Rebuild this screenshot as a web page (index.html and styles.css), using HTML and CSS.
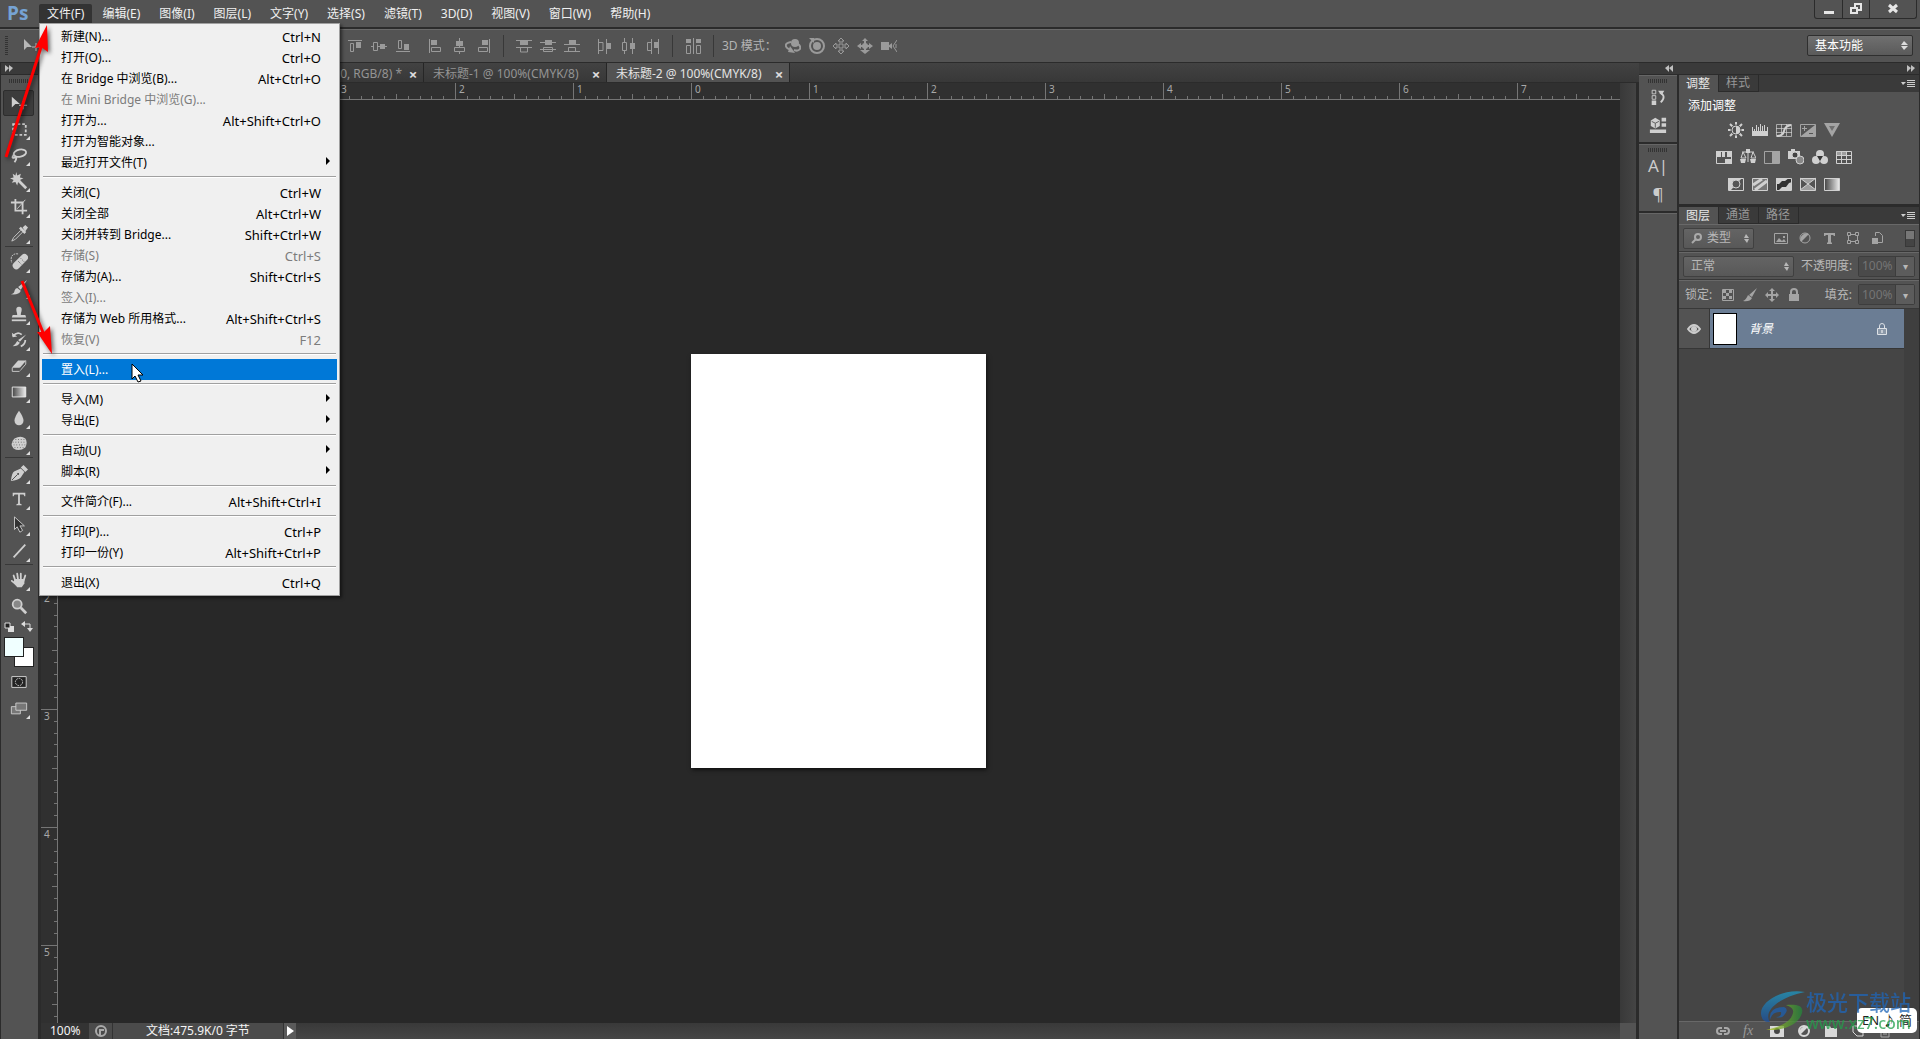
FILE: index.html
```html
<!DOCTYPE html>
<html lang="zh-CN">
<head>
<meta charset="utf-8">
<title>Photoshop</title>
<link rel="stylesheet" href="styles.css">
</head>
<body>
<header class="menubar">
  <div class="logo">Ps</div>
  <nav class="menus">
    <div class="menu-host">
      <button class="menu-title open">文件(F)</button>
      <div class="dropdown" role="menu">
        <button class="entry"><span>新建(N)...</span><span>Ctrl+N</span></button>
        <button class="entry"><span>打开(O)...</span><span>Ctrl+O</span></button>
        <button class="entry"><span>在 Bridge 中浏览(B)...</span><span>Alt+Ctrl+O</span></button>
        <button class="entry" disabled><span>在 Mini Bridge 中浏览(G)...</span></button>
        <button class="entry"><span>打开为...</span><span>Alt+Shift+Ctrl+O</span></button>
        <button class="entry"><span>打开为智能对象...</span></button>
        <button class="entry sub"><span>最近打开文件(T)</span></button>
        <hr>
        <button class="entry"><span>关闭(C)</span><span>Ctrl+W</span></button>
        <button class="entry"><span>关闭全部</span><span>Alt+Ctrl+W</span></button>
        <button class="entry"><span>关闭并转到 Bridge...</span><span>Shift+Ctrl+W</span></button>
        <button class="entry" disabled><span>存储(S)</span><span>Ctrl+S</span></button>
        <button class="entry"><span>存储为(A)...</span><span>Shift+Ctrl+S</span></button>
        <button class="entry" disabled><span>签入(I)...</span></button>
        <button class="entry"><span>存储为 Web 所用格式...</span><span>Alt+Shift+Ctrl+S</span></button>
        <button class="entry" disabled><span>恢复(V)</span><span>F12</span></button>
        <hr>
        <button class="entry hot"><span>置入(L)...</span></button>
        <hr>
        <button class="entry sub"><span>导入(M)</span></button>
        <button class="entry sub"><span>导出(E)</span></button>
        <hr>
        <button class="entry sub"><span>自动(U)</span></button>
        <button class="entry sub"><span>脚本(R)</span></button>
        <hr>
        <button class="entry"><span>文件简介(F)...</span><span>Alt+Shift+Ctrl+I</span></button>
        <hr>
        <button class="entry"><span>打印(P)...</span><span>Ctrl+P</span></button>
        <button class="entry"><span>打印一份(Y)</span><span>Alt+Shift+Ctrl+P</span></button>
        <hr>
        <button class="entry"><span>退出(X)</span><span>Ctrl+Q</span></button>
      </div>
    </div>
    <button class="menu-title">编辑(E)</button>
    <button class="menu-title">图像(I)</button>
    <button class="menu-title">图层(L)</button>
    <button class="menu-title">文字(Y)</button>
    <button class="menu-title">选择(S)</button>
    <button class="menu-title">滤镜(T)</button>
    <button class="menu-title">3D(D)</button>
    <button class="menu-title">视图(V)</button>
    <button class="menu-title">窗口(W)</button>
    <button class="menu-title">帮助(H)</button>
  </nav>
  <div class="window-buttons">
    <button aria-label="最小化"><svg width="12" height="12"><path d="M1 8h10v3H1z" fill="#e6e6e6"/></svg></button>
    <button aria-label="还原"><svg width="12" height="12" fill="none" stroke="#e6e6e6" stroke-width="2"><path d="M5 4V1h6v6H8"/><path d="M1 5h6v5H1z"/></svg></button>
    <button class="wide" aria-label="关闭"><svg width="12" height="12" stroke="#e6e6e6" stroke-width="3"><path d="M2 2l8 7M10 2L2 9"/></svg></button>
  </div>
</header>

<div class="options">
  <svg class="side-grip" width="3" height="20"><path d="M1.500 0v20" stroke="#333" stroke-width="3" stroke-dasharray="1 1"/></svg>
  <svg class="move-icon" width="18" height="16"><path d="M1 1v11l3-3 5 0z" fill="#b8b8b8"/><path d="M9 9h8M13 5v8" stroke="#b8b8b8"/></svg>
  <div class="align-tools">
    <button aria-label="顶对齐"><svg class="i" viewBox="0 0 16 16"><path d="M1 2.500h14"/><path d="M3.500 5.500h3v8h-3z"/><path class="f" d="M9 4h5v6H9z"/></svg></button>
    <button aria-label="垂直居中"><svg class="i" viewBox="0 0 16 16"><path d="M0 8.500h2M7 8.500h2M14 8.500h2M2.500 4.500h4v8h-4z"/><path class="f" d="M9 6h5v5H9z"/></svg></button>
    <button aria-label="底对齐"><svg class="i" viewBox="0 0 16 16"><path d="M1 13.500h14M3.500 2.500h3v8h-3z"/><path class="f" d="M9 6h5v6H9z"/></svg></button>
    <button class="gap" aria-label="左对齐"><svg class="i" viewBox="0 0 16 16"><path d="M2.500 1v14M4.500 9.500h9v4h-9z"/><path class="f" d="M4 2h6v5H4z"/></svg></button>
    <button aria-label="水平居中"><svg class="i" viewBox="0 0 16 16"><path d="M8.500 0v9M8.500 13v3M3.500 9.500h10v4h-10z"/><path class="f" d="M5 3h7v5H5z"/></svg></button>
    <button aria-label="右对齐"><svg class="i" viewBox="0 0 16 16"><path d="M14.500 1v14M3.500 9.500h9v4h-9z"/><path class="f" d="M7 2h6v5H7z"/></svg></button>
  </div>
  <div class="align-tools ruled">
    <button aria-label="按顶分布"><svg class="i" viewBox="0 0 16 16"><path d="M0 2.500h16M0 9.500h16M4.500 10v4h7v-4"/><path class="f" d="M4 3h8v4H4z"/></svg></button>
    <button aria-label="垂直居中分布"><svg class="i" viewBox="0 0 16 16"><path d="M0 4.500h16M0 11.500h16M3.500 9.500h9v4h-9z"/><path class="f" d="M5 2h7v5H5z"/></svg></button>
    <button aria-label="按底分布"><svg class="i" viewBox="0 0 16 16"><path d="M0 6.500h16M0 13.500h16M4.500 13V9.500h7V13"/><path class="f" d="M5 2h7v5H5z"/></svg></button>
    <button class="gap" aria-label="按左分布"><svg class="i" viewBox="0 0 16 16"><path d="M2.500 1v15M3 4.500h4v8H3M10.500 1v15"/><path class="f" d="M10 5h5v6h-5z"/></svg></button>
    <button aria-label="水平居中分布"><svg class="i" viewBox="0 0 16 16"><path d="M4.500 0v4M4.500 12v4M2.500 4.500h4v8h-4zM12.500 0v16"/><path class="f" d="M10 5h5v6h-5z"/></svg></button>
    <button aria-label="按右分布"><svg class="i" viewBox="0 0 16 16"><path d="M7.500 1v15M7 4.500H3.500v8H7M14.500 1v15"/><path class="f" d="M10 4h5v6h-5z"/></svg></button>
  </div>
  <div class="align-tools ruled tight">
    <button aria-label="自动对齐图层"><svg class="i" viewBox="0 0 16 16"><path d="M1.500 7.500h4v8h-4zM8.500 0v16M11.500 7.500h4v8h-4z"/><path class="f" d="M1 1h5v4H1zM11 1h5v4h-5z"/></svg></button>
  </div>
  <div class="align-tools ruled mode">
    <span>3D 模式：</span>
    <button aria-label="旋转 3D 对象"><svg class="i" viewBox="0 0 16 16"><circle cx="10" cy="5" r="4" class="f"/><path d="M6 4C-2 5 0 11 7 12M13 6c5 4 1 8-4 6" stroke-width="2"/><path class="f" d="M5 8l5 7-7-1z"/></svg></button>
    <button aria-label="滚动 3D 对象"><svg class="i" viewBox="0 0 16 16"><circle cx="8" cy="8" r="7" stroke-width="2"/><circle cx="8" cy="8" r="4" class="f"/><path class="f" d="M0 0h5v5z"/></svg></button>
    <button aria-label="拖动 3D 对象"><svg class="i" viewBox="0 0 16 16"><path d="M8 0l3 3H9v4h4V5l3 3-3 3V9H9v4h2l-3 3-3-3h2V9H3v2L0 8l3-3v2h4V3H5z"/></svg></button>
    <button aria-label="滑动 3D 对象"><svg class="i" viewBox="0 0 16 16"><path class="f" d="M8 0l3 3H5zM0 8l4-3v6zM16 8l-4-3v6zM8 16l5-4H3z"/><circle cx="8" cy="8" r="3" class="f"/><path d="M2 8h12M8 2v12" stroke-width="2"/></svg></button>
    <button aria-label="缩放 3D 对象"><svg class="i" viewBox="0 0 16 16"><path class="f" d="M0 4h8v8H0zM7 8l4-3v6z"/><path d="M16 2l-4 6 4 6M15 6v4"/></svg></button>
  </div>
  <button class="workspace"><span>基本功能</span><svg width="7" height="9" fill="#ddd"><path d="M0 4l3-4 4 4zM0 5h7L3 9z"/></svg></button>
</div>

<div class="work">
  <aside class="toolbox">
    <div class="strip"><svg class="dbl" width="8" height="7"><path d="M0 0l4 3-4 4zM4 0l4 3-4 4z"/></svg></div>
    <div class="tools">
      <svg class="grip" width="20" height="4"><path d="M0 2h20" stroke="#333" stroke-width="4" stroke-dasharray="1 1"/></svg>
      <button class="tool on" aria-label="移动工具"><svg class="t" viewBox="0 0 20 20"><path class="f" d="M2 3v12l4-4h5z"/><path d="M10 12.500h9M14.500 8v9"/></svg></button>
      <button class="tool more" aria-label="矩形选框工具"><svg class="t" viewBox="0 0 20 20"><path d="M3.500 4.500h14v12h-14z" stroke-dasharray="3 2" stroke-width="2"/></svg></button>
      <button class="tool more" aria-label="套索工具"><svg class="t" viewBox="0 0 20 20"><ellipse cx="11" cy="8" rx="7" ry="4" stroke-width="2" transform="rotate(-12 11 8)"/><path d="M4 10q-3 4 1 3t0 5" stroke-width="2"/></svg></button>
      <button class="tool more" aria-label="魔棒工具"><svg class="t" viewBox="0 0 20 20"><path class="f" d="M7 0l1 4 4-2-1 4 4 1-4 2 2 3-4-1-1 4-2-4-4 1 2-3-4-2 4-1-1-4 3 2z"/><path d="M10 10l8 8" stroke-width="3"/></svg></button>
      <button class="tool more" aria-label="裁剪工具"><svg class="t" viewBox="0 0 20 20"><path d="M6 1v13h13M1 5h13v13" stroke-width="2"/><path d="M8 12l9-10"/></svg></button>
      <button class="tool more" aria-label="吸管工具"><svg class="t" viewBox="0 0 20 20"><path d="M12 7l-8 8-2 4 4-2 8-8"/><path class="f" d="M10 5l2-2 6 6-2 2zM14 4l3-3 3 3-3 4z"/></svg></button>
      <hr>
      <button class="tool more" aria-label="污点修复画笔工具"><svg class="t" viewBox="0 0 20 20"><path d="M9 1C2 0 0 5 2 11" stroke-dasharray="2 1"/><path d="M7 14l9-9" stroke-width="8" stroke-linecap="round"/><path d="M9 9l4 4M12 6l4 4" stroke="#555" stroke-dasharray="1 1"/></svg></button>
      <button class="tool more" aria-label="画笔工具"><svg class="t" viewBox="0 0 20 20"><path class="f" d="M19 1l-7 11-3-3zM8 10l4 3q-2 5-11 4 4-1 4-4 1-3 3-3z"/></svg></button>
      <button class="tool more" aria-label="仿制图章工具"><svg class="t" viewBox="0 0 20 20"><path class="f" d="M7 5a3 3 0 1 1 6 0c0 3-1 3-1 6h5l1 3H2l1-3h5c0-3-1-3-1-6z"/><path d="M2 17h16" stroke-width="2"/></svg></button>
      <button class="tool more" aria-label="历史记录画笔工具"><svg class="t" viewBox="0 0 20 20"><path class="f" d="M18 4l-7 8-2-2zM8 11l3 2q-2 4-8 4 3-2 5-6zM2 2l1 5 5-1z"/><path d="M3 6q5-6 10-2M17 10q0 5-5 7" stroke-width="2"/></svg></button>
      <button class="tool more" aria-label="橡皮擦工具"><svg class="t" viewBox="0 0 20 20"><path class="f" d="M9 4h9l-7 8H2z"/><path d="M2.500 12v4h8l7-8V4"/><path d="M11 12v4" stroke="#555"/></svg></button>
      <button class="tool more" aria-label="渐变工具"><svg class="t" viewBox="0 0 20 20"><defs><linearGradient id="fade"><stop stop-color="#444"/><stop offset="1" stop-color="#eee"/></linearGradient></defs><path d="M2.500 4.500h15v11h-15z" fill="url(#fade)" stroke="#eee"/></svg></button>
      <button class="tool more" aria-label="模糊工具"><svg class="t" viewBox="0 0 20 20"><path class="f" d="M10 2q5 7 5 11a5 5 0 0 1-10 0q0-4 5-11z"/></svg></button>
      <button class="tool more" aria-label="海绵工具"><svg class="t" viewBox="0 0 20 20"><path class="f" d="M5 4q7-4 12 0 3 4 0 10-7 5-13 1-5-5 1-11z"/><path d="M3 8h14M4 11h14M5 14h11M6 5h10" stroke="#666" stroke-dasharray="1 2"/></svg></button>
      <hr>
      <button class="tool more" aria-label="钢笔工具"><svg class="t" viewBox="0 0 20 20"><path class="f" d="M1 19q1-10 4-11l7-3 4 4-4 6q-3 3-11 4zM12 4l3-3 5 5-3 3z"/><path d="M2 18l6-6" stroke="#444"/><circle cx="9" cy="11" r="1" fill="#333" stroke="none"/></svg></button>
      <button class="tool more" aria-label="文字工具"><svg class="t" viewBox="0 0 20 20"><path class="f" d="M3 3h14v4h-1l-1-2h-4v10l2 1v1H7v-1l2-1V5H5L4 7H3z"/></svg></button>
      <button class="tool more" aria-label="路径选择工具"><svg class="t" viewBox="0 0 20 20"><path d="M5 1v14l3-3 3 6 3-2-3-5h5z" fill="#333"/></svg></button>
      <button class="tool more" aria-label="直线工具"><svg class="t" viewBox="0 0 20 20"><path d="M4 17L17 3" stroke-width="2"/></svg></button>
      <hr>
      <button class="tool more" aria-label="抓手工具"><svg class="t" viewBox="0 0 20 20"><path d="M6 11L4 5M9 10L8 3M12 10V3M15 11l2-6M7 15l-5-4" stroke-width="2" stroke-linecap="round"/><path class="f" d="M5 9h11v5l-3 4H8l-4-5z"/></svg></button>
      <button class="tool" aria-label="缩放工具"><svg class="t" viewBox="0 0 20 20"><circle cx="8" cy="8" r="5" stroke-width="2" fill="#888"/><path d="M12 12l6 6" stroke-width="3"/></svg></button>
      <div class="mini">
        <svg width="10" height="10"><path d="M4 4h6v6H4z" fill="#ddd"/><path d="M1 1h5v5H1z" fill="#222" stroke="#ddd"/></svg>
        <svg width="12" height="12"><path d="M3 3h6v5" stroke="#ddd" fill="none"/><path d="M4 0v6L0 3zM6 7h6l-3 4z" fill="#ddd"/></svg>
      </div>
      <div class="swatches"><button class="fg" aria-label="前景色"></button><button class="bg" aria-label="背景色"></button></div>
      <button class="tool" aria-label="快速蒙版"><svg class="t" viewBox="0 0 20 20"><path d="M2 4h16v12H2z" fill="#222" stroke="#ddd"/><circle cx="10" cy="10" r="4" stroke-dasharray="2 1"/></svg></button>
      <button class="tool more" aria-label="屏幕模式"><svg class="t" viewBox="0 0 20 20"><path d="M1.500 8.500h10v8h-10z" fill="#777"/><path d="M6.500 4.500h12v8h-12z" fill="#777"/></svg></button>
    </div>
  </aside>

  <main class="document">
    <div class="tabs">
      <div class="tab first"><span>未标题-3 @ 66.7%(图层 0, RGB/8) *</span><button aria-label="关闭">×</button></div>
      <div class="tab"><span>未标题-1 @ 100%(CMYK/8)</span><button aria-label="关闭">×</button></div>
      <div class="tab current"><span>未标题-2 @ 100%(CMYK/8)</span><button aria-label="关闭">×</button></div>
    </div>
    <div class="view">
      <div class="stage">
        <div class="corner"></div>
        <div class="ruler-h"><span>5</span><span>4</span><span>3</span><span>2</span><span>1</span><span>0</span><span>1</span><span>2</span><span>3</span><span>4</span><span>5</span><span>6</span><span>7</span></div>
        <div class="ruler-v"><span>2</span><span>1</span><span>0</span><span>1</span><span>2</span><span>3</span><span>4</span><span>5</span></div>
        <div class="canvas"><div class="paper"></div></div>
      </div>
      <div class="vscroll"></div>
    </div>
    <footer class="status">
      <span class="zoom">100%</span>
      <button class="share" aria-label="共享"><svg width="12" height="12" fill="none" stroke="#aaa" stroke-width="2"><circle cx="6" cy="6" r="5"/><path d="M5 10V5h4"/></svg></button>
      <span class="size">文档:475.9K/0 字节</span>
      <button class="play" aria-label="更多"><svg width="7" height="10"><path d="M0 0l7 5-7 5z" fill="#fff"/></svg></button>
      <span class="hscroll"></span>
      <span class="nook"></span>
    </footer>
  </main>

  <aside class="dock">
    <div class="strip right"><svg class="dbl" width="8" height="7"><path d="M4 0v7L0 3zM8 0v7L4 3z"/></svg></div>
    <div class="dock-group">
      <svg class="grip" width="20" height="4"><path d="M0 2h20" stroke="#333" stroke-width="4" stroke-dasharray="1 1"/></svg>
      <button aria-label="历史记录"><svg class="t" viewBox="0 0 20 20"><path d="M3.500 2.500h4v4h-4zM3.500 8.500h4v4h-4z"/><path class="f" d="M3 14h5v5H3zM10 3h7l-3 5z"/><path d="M12 5q8 4 1 11" stroke-width="2"/></svg></button>
      <button aria-label="属性"><svg class="t" viewBox="0 0 20 20"><path class="f" d="M2 5l5-3 5 3v6l-5 3-5-3z"/><path d="M3 6l4 2 4-2M7 8v5" stroke="#555"/><path class="f" d="M14 2h5v4h-5zM14 8h5v4h-5zM1 15h18v4H1z"/></svg></button>
    </div>
    <div class="dock-group">
      <svg class="grip" width="20" height="4"><path d="M0 2h20" stroke="#333" stroke-width="4" stroke-dasharray="1 1"/></svg>
      <button class="letter" aria-label="字符">A|</button>
      <button class="letter" aria-label="段落">¶</button>
    </div>
    <div class="dock-rest"></div>
  </aside>

  <section class="panels">
    <div class="strip right"><svg class="dbl" width="8" height="7"><path d="M0 0l4 3-4 4zM4 0l4 3-4 4z"/></svg></div>
    <div class="panel">
      <div class="panel-tabs">
        <button class="ptab current">调整</button><button class="ptab">样式</button>
        <svg class="flyout" width="14" height="8"><path d="M0 2h5L2 5z" fill="#ccc"/><path d="M6 0.500h8M6 2.500h8M6 4.500h8M6 6.500h8" stroke="#ccc"/></svg>
      </div>
      <div class="adjust">
        <p>添加调整</p>
        <div class="adj-row">
          <svg class="a" viewBox="0 0 16 16"><path d="M8 0v16M0 8h16M2 2l12 12M14 2L2 14" stroke-width="2"/><circle cx="8" cy="8" r="5" fill="#535353" stroke="#535353"/><circle cx="8" cy="8" r="4"/><path class="f" d="M8 4a4 4 0 0 1 0 8z"/></svg>
          <svg class="a" viewBox="0 0 16 16"><path class="f" d="M0 9h16v5H0z"/><path d="M.5 5v5M2.500 7v3M4.500 3v6M6.500 5v4M8.500 2v7M10.500 4v5M12.500 3v6M15.500 5v5"/></svg>
          <svg class="a" viewBox="0 0 16 16"><path d="M.5 2.500h15v12H.5zM5.500 2v12M10.500 2v12M0 6.500h16M0 10.500h16" opacity=".7"/><path d="M1 14q6 0 7-5t7-6" stroke-width="2"/></svg>
          <svg class="a dim" viewBox="0 0 16 16"><path d="M.5 2.500h15v12H.5z"/><path class="f" d="M1 14L15 3v11z"/><path d="M2 6.500h5M4.500 4v5"/><path d="M9 11.500h4" stroke="#535353"/></svg>
          <svg class="a dim" viewBox="0 0 16 16"><path class="f" d="M0 1h16L8 15z"/><path d="M5 4h6L8 9z" fill="#808080" stroke="none"/></svg>
        </div>
        <div class="adj-row">
          <svg class="a" viewBox="0 0 16 16"><path d="M.5 2.500h15v12H.5z"/><path class="f" d="M0 2h5v6H0zM6 2h3v6H6zM11 2h5v6h-5zM9 10h7v5H9z"/></svg>
          <svg class="a" viewBox="0 0 16 16"><path d="M8 1v12M2 3h12M3 3L1 9h5zM13 3l-2 6h5z"/><path class="f" d="M0 10h6l-1 4H1zM10 10h6l-1 4h-4zM6 0h4v4H6z"/></svg>
          <svg class="a dim" viewBox="0 0 16 16"><path d="M.5 2.500h15v12H.5z"/><path class="f" d="M8 2h8v12H8z"/></svg>
          <svg class="a" viewBox="0 0 16 16"><path class="f" d="M0 2h3V0h4v2h5v8H0z"/><circle cx="7" cy="6" r="3" fill="#444"/><circle cx="12" cy="11" r="4" fill="#888"/></svg>
          <svg class="a" viewBox="0 0 16 16"><circle class="f" cx="8" cy="5" r="4"/><circle class="f" cx="4" cy="11" r="4"/><circle class="f" cx="12" cy="11" r="4"/><path d="M5 7h6l-3 5z" fill="#333" stroke="none"/></svg>
          <svg class="a" viewBox="0 0 16 16"><path d="M.5 2.500h15v12H.5zM5.500 2v12M10.500 2v12M0 6.500h16M0 10.500h16"/><path class="f" d="M0 2h11v4H0z" opacity=".6"/></svg>
        </div>
        <div class="adj-row">
          <svg class="a" viewBox="0 0 16 16"><path d="M.5 2.500h15v12H.5z"/><path class="f" d="M0 2h14L3 14H0z"/><circle cx="8" cy="8" r="4" fill="#555"/></svg>
          <svg class="a" viewBox="0 0 16 16"><path d="M.5 2.500h15v12H.5z" fill="#777"/><path d="M1 9L10 3M3 14L15 5" stroke-width="3"/></svg>
          <svg class="a" viewBox="0 0 16 16"><path d="M.5 2.500h15v12H.5z" fill="#333"/><path class="f" d="M0 2h13l-4 3H6L3 8H0zM16 6v8H3l3-3h4l3-4z"/></svg>
          <svg class="a" viewBox="0 0 16 16"><path d="M.5 2.500h15v12H.5z"/><path class="f" d="M0 2h16L8 8zM0 14l8-6 8 6z" opacity=".6"/><path d="M0 2l16 12M16 2L0 14"/></svg>
          <svg class="a" viewBox="0 0 16 16"><path d="M.5 2.500h15v12H.5z" fill="url(#fade)"/></svg>
        </div>
      </div>
    </div>
    <div class="panel layers">
      <div class="panel-tabs">
        <button class="ptab current">图层</button><button class="ptab">通道</button><button class="ptab">路径</button>
        <svg class="flyout" width="14" height="8"><path d="M0 2h5L2 5z" fill="#ccc"/><path d="M6 0.500h8M6 2.500h8M6 4.500h8M6 6.500h8" stroke="#ccc"/></svg>
      </div>
      <div class="lrow">
        <button class="pick kind"><svg width="11" height="11" fill="none" stroke="#aaa" stroke-width="2"><circle cx="7" cy="4" r="3"/><path d="M5 6l-4 4"/></svg><span>类型</span><svg class="ud" width="5" height="9"><path d="M0 4l2-4 3 4zM0 5h5L3 9z"/></svg></button>
        <div class="filters">
          <svg class="l" viewBox="0 0 14 14"><path d="M.5 2.500h13v10H.5z"/><path class="f" d="M2 11l3-4 3 3 2-2 2 3zM9 5h2v2H9z"/></svg>
          <svg class="l" viewBox="0 0 14 14"><circle cx="7" cy="7" r="5"/><path class="f" d="M11 3a6 6 0 0 0-8 8z"/></svg>
          <svg class="l" viewBox="0 0 14 14"><path class="f" d="M2 2h11v3h-1l-1-1H9v7l1 1v1H5v-1l1-1V4H4L3 5H2z"/></svg>
          <svg class="l" viewBox="0 0 14 14"><path d="M2.500 3.500h9v7h-9z"/><path d="M1.500 1.500h3v3h-3zM9.500 1.500h3v3h-3zM1.500 9.500h3v3h-3zM9.500 9.500h3v3h-3z" fill="#535353"/></svg>
          <svg class="l" viewBox="0 0 14 14"><path d="M5.500 5V1.500h4l3 3v7H8"/><path class="f" d="M2 7h6v6H2z"/></svg>
        </div>
        <span class="switch"></span>
      </div>
      <div class="lrow">
        <button class="pick blend"><span>正常</span><svg class="ud" width="5" height="9"><path d="M0 4l2-4 3 4zM0 5h5L3 9z"/></svg></button>
        <label for="opacity">不透明度:</label>
        <span class="field"><input id="opacity" value="100%" disabled><button aria-label="不透明度滑块">▾</button></span>
      </div>
      <div class="lrow tall">
        <span class="lock-label">锁定:</span>
        <div class="locks">
          <svg class="l" viewBox="0 0 14 14"><path d="M1.500 1.500h11v11h-11z"/><path class="f" d="M2 2h3v3H2zM8 2h3v3H8zM5 5h3v3H5zM2 8h3v3H2zM8 8h3v3H8z"/></svg>
          <svg class="l" viewBox="0 0 14 14"><path class="f" d="M14 0L9 9 6 7zM5 7l4 3q-2 4-9 3 3-1 5-6z"/></svg>
          <svg class="l" viewBox="0 0 14 14"><path d="M7 1v12M1 7h12" stroke-width="2"/><path class="f" d="M7 0l3 3H4zM7 14l3-3H4zM0 7l3-3v6zM14 7l-3-3v6z"/></svg>
          <svg class="l" viewBox="0 0 14 14"><path class="f" d="M2 6h10v7H2z"/><path d="M4 6V4a3 3 0 0 1 6 0v2" stroke-width="2"/></svg>
        </div>
        <label for="fill">填充:</label>
        <span class="field close"><input id="fill" value="100%" disabled><button aria-label="填充滑块">▾</button></span>
      </div>
      <div class="list">
        <div class="layer">
          <button class="eye" aria-label="可见性"><svg width="14" height="12"><path d="M1 6q6-8 12 0-6 8-12 0z" fill="none" stroke="#ccc" stroke-width="2"/><circle cx="7" cy="6" r="3" fill="#ccc"/></svg></button>
          <div class="layer-body"><span class="thumb"></span><em>背景</em><svg width="12" height="14"><path d="M1.500 6.500h9v6h-9z" fill="#8b98a8" stroke="#dde1e6"/><path d="M3.500 6V4a2 2 0 0 1 5 0v2" fill="none" stroke="#dde1e6"/><path d="M6 8v3" stroke="#fff"/></svg></div>
        </div>
        <div class="list-scroll"></div>
      </div>
      <div class="layer-tools">
        <svg class="b dim" viewBox="0 0 14 14"><path d="M6 4H4a3 3 0 0 0 0 6h2M8 4h2a3 3 0 0 1 0 6H8M4 7h6" stroke-width="2"/></svg>
        <span class="fx">fx</span>
        <svg class="b" viewBox="0 0 14 14"><path class="f" d="M0 2h14v11H0z"/><circle cx="7" cy="7" r="3" fill="#444" stroke="none"/></svg>
        <svg class="b" viewBox="0 0 14 14"><circle cx="7" cy="7" r="5" stroke-width="2"/><path class="f" d="M11 3a6 6 0 0 0-8 8z"/></svg>
        <svg class="b" viewBox="0 0 14 14"><path class="f" d="M1 2h5l1 2h6v9H1z"/></svg>
        <svg class="b" viewBox="0 0 14 14"><path d="M2 2h10v10H6L2 8z"/></svg>
        <svg class="b dim" viewBox="0 0 14 14"><path d="M1 3h12M3 4v9h8V4M6 5v6M8 5v6"/></svg>
      </div>
    </div>
  </section>
</div>

<svg class="arrows" width="70" height="370" aria-hidden="true">
  <g fill="#f00" stroke="#f00"><path d="M6 157L42 44" stroke-width="3"/><path d="M47 25L35 48l6-1 7 5z" stroke="none"/><path d="M22 281l22 54" stroke-width="3"/><path d="M52 354l-15-22 7 0 6-6z" stroke="none"/></g>
</svg>
<svg class="cursor" width="14" height="20" aria-hidden="true"><path d="M1 1v15l3-3 3 6 3-1-3-6h5z" fill="#fff" stroke="#000"/></svg>

<div class="ime">EN <span>♪</span> 简</div>
<div class="watermark">
  <svg width="46" height="42" viewBox="0 0 46 42"><defs><linearGradient id="sea" x2="0" y2="1"><stop stop-color="#1f9ac4"/><stop offset="1" stop-color="#1d4f9c"/></linearGradient><linearGradient id="leaf"><stop stop-color="#b4c21c"/><stop offset="1" stop-color="#23853c"/></linearGradient></defs><path d="M45 2C22-2 0 12 1 24q1 9 9 8C3 22 17 8 45 2z" fill="url(#sea)"/><path d="M10 30q-2-13 14-13 5 2 1 7-3 5-9 3 6 0 5-5-9-1-11 8z" fill="#1d60b0"/><path d="M26 15c10-1 18 0 16 8-3 11-17 18-36 17 14-3 25-8 27-17 1-4-2-6-7-8z" fill="url(#leaf)"/></svg>
  <div><strong>极光下载站</strong><b>www.xz7.com</b></div>
</div>
</body>
</html>
```
FILE: styles.css
```css
* { box-sizing: border-box; }

body {
  margin: 0;
  height: 100vh;
  display: flex;
  flex-direction: column;
  position: relative;
  overflow: hidden;
  background: #535353;
  color: #ddd;
  font: 12px/16px "Noto Sans", "Noto Sans CJK SC", sans-serif;
}

button {
  margin: 0;
  padding: 0;
  border: 0;
  background: none;
  color: inherit;
  font: inherit;
  display: flex;
  align-items: center;
  justify-content: center;
}

svg { display: block; flex: none; }
hr { margin: 0; border: 0; }

/* menu bar */
.menubar {
  display: flex;
  flex: none;
  height: 29px;
  border-bottom: 2px solid #2b2b2b;
  color: #f0f0f0;
}
.logo {
  width: 39px;
  padding-left: 7px;
  color: #76a3d4;
  font: bold 19px/26px "Open Sans", sans-serif;
}
.menus { display: flex; gap: 1px; height: 19px; margin-top: 4px; flex: 1; }
.menu-host { position: relative; }
.menu-title { height: 19px; padding: 0 9px; white-space: nowrap; }
.menu-title.open { padding: 0 8px; background: #333; border-radius: 2px 2px 0 0; }

.dropdown {
  position: absolute;
  z-index: 5;
  top: 19px;
  left: 0;
  width: 301px;
  padding: 2px;
  border: 1px solid #a0a0a0;
  background: #f0f0f0;
  color: #000;
  box-shadow: 2px 2px 3px rgba(0, 0, 0, .5);
}
.entry {
  width: 100%;
  height: 21px;
  padding: 0 16px 0 19px;
  justify-content: space-between;
  white-space: nowrap;
}
.entry span + span { font-size: 13px; }
.entry:disabled { color: #7c7c7c; }
.entry.hot { background: #0078d7; color: #fff; }
.entry.sub { padding-right: 7px; }
.entry.sub::after {
  content: "";
  margin-bottom: 4px;
  border: 4px solid transparent;
  border-left-color: #000;
  border-right: 0;
}
.dropdown hr {
  height: 9px;
  margin: 0 1px;
  background: linear-gradient(#a0a0a0, #a0a0a0) 0 3px / 100% 1px no-repeat,
              linear-gradient(#fff, #fff) 0 4px / 100% 1px no-repeat;
}

.window-buttons {
  display: flex;
  height: 19px;
  margin-right: 3px;
  border: 1px solid #2b2b2b;
  border-top: 0;
  border-radius: 0 0 3px 3px;
}
.window-buttons button { width: 27px; }
.window-buttons button + button { border-left: 1px solid #2b2b2b; }
.window-buttons .wide { width: 47px; }

/* options bar */
.options {
  display: flex;
  flex: none;
  align-items: center;
  height: 34px;
  padding: 0 7px 1px 5px;
  border-top: 1px solid #6a6a6a;
  border-bottom: 1px solid #2b2b2b;
}
.move-icon { margin: 0 306px 0 15px; }
.align-tools { display: flex; gap: 8px; align-items: center; height: 22px; }
.align-tools button { width: 16px; }
.align-tools .gap { margin-left: 8px; }
.ruled { margin-left: 12px; padding-left: 12px; border-left: 1px solid #383838; }
.ruled.mode { padding-left: 8px; }
.mode span { width: 55px; color: #b4b4b4; white-space: nowrap; }
.i, .a, .t, .l, .b { fill: none; stroke: #9a9a9a; }
.i { width: 16px; height: 16px; }
.i .f { fill: #9a9a9a; stroke: none; }
.workspace {
  width: 106px;
  height: 21px;
  margin-left: auto;
  padding: 0 4px 0 7px;
  justify-content: space-between;
  border: 1px solid #2f2f2f;
  border-radius: 2px;
  background: linear-gradient(#707070, #5a5a5a);
  color: #fff;
}

/* shared chrome */
.work { display: flex; flex: 1; min-height: 0; background: #2b2b2b; }
.strip {
  display: flex;
  flex: none;
  align-items: center;
  height: 12px;
  padding: 0 4px;
  background: #3a3a3a;
  border-bottom: 1px solid #2b2b2b;
}
.strip.right { justify-content: flex-end; }
.dbl { fill: #c0c0c0; }
.grip { margin: 0 auto; }

/* toolbox */
.toolbox { width: 41px; padding: 0 3px 0 1px; display: flex; flex-direction: column; }
.tools { flex: 1; background: #535353; padding: 4px 2px 0 0; }
.tools .grip { margin-bottom: 7px; }
.tools hr { height: 1px; margin: 0 3px 2px 4px; background: #383838; }
.tool { position: relative; width: 31px; height: 26px; margin: 0 auto; }
.tool.on { background: #3c3c3c; border: 1px solid #2d2d2d; border-radius: 2px; }
.tool.more::after {
  content: "";
  position: absolute;
  right: 4px;
  bottom: 2px;
  border: 2px solid transparent;
  border-right-color: #ddd;
  border-bottom-color: #ddd;
}
.t { width: 18px; height: 18px; stroke: #cfcfcf; }
.t .f { fill: #cfcfcf; stroke: none; }
.mini { display: flex; justify-content: space-between; padding: 2px 3px 4px; align-items: center; }
.swatches { display: grid; grid-template-columns: 10px 10px 10px; grid-template-rows: 10px 10px 10px; margin: 0 0 2px 3px; }
.swatches button { border: 1px solid #222; background: #fff; }
.swatches .fg { grid-area: 1 / 1 / 3 / 3; background: #f0ffff; z-index: 1; }
.swatches .bg { grid-area: 2 / 2 / 4 / 4; }

/* document window */
.document { flex: 1; min-width: 0; display: flex; flex-direction: column; }
.tabs {
  display: flex;
  flex: none;
  height: 20px;
  background: linear-gradient(#424242, #383838);
  border-bottom: 1px solid #2b2b2b;
}
.tab {
  display: flex;
  align-items: center;
  justify-content: space-between;
  width: 183px;
  padding: 2px 5px 0 9px;
  border-right: 1px solid #262626;
  color: #949494;
  white-space: nowrap;
}
.tab.first { width: 383px; justify-content: flex-end; gap: 6px; }
.tab.current { background: #535353; color: #e4e4e4; }
.tab button { width: 10px; height: 12px; color: #ddd; font-size: 15px; font-weight: bold; line-height: 12px; }

.view { display: flex; flex: 1; min-height: 0; }
.stage { flex: 1; min-width: 0; display: grid; grid-template-columns: 17px minmax(0, 1fr); grid-template-rows: 17px minmax(0, 1fr); }
.vscroll { width: 16px; margin-right: 3px; background: linear-gradient(90deg, #393939, #444); }
.corner, .ruler-h, .ruler-v { background: #303030; }
.ruler-h, .ruler-v { display: flex; overflow: hidden; color: #a8a8a8; font-size: 10px; line-height: 12px; }
.ruler-h {
  border-bottom: 1px solid #757575;
  background: #303030 url("data:image/svg+xml,%3Csvg xmlns='http://www.w3.org/2000/svg' width='118' height='16'%3E%3Cpath d='M.5 0v16M12.500 13v3M24.500 13v3M35.500 13v3M47.500 13v3M59.500 11v5M71.500 13v3M83.500 13v3M94.500 13v3M106.500 13v3' stroke='%23757575'/%3E%3C/svg%3E") 43px 0;
  padding-left: 43px;
}
.ruler-h span { flex: 0 0 118px; padding-left: 4px; }
.ruler-v {
  flex-direction: column;
  border-right: 1px solid #757575;
  background: #303030 url("data:image/svg+xml,%3Csvg xmlns='http://www.w3.org/2000/svg' width='16' height='118'%3E%3Cpath d='M0 .5h16M13 12.500h3M13 24.500h3M13 35.500h3M13 47.500h3M11 59.500h5M13 71.500h3M13 83.500h3M13 94.500h3M13 106.500h3' stroke='%23757575'/%3E%3C/svg%3E") 0 19px;
  padding-top: 19px;
}
.ruler-v span { flex: 0 0 118px; padding: 1px 0 0 3px; }
.canvas { display: flex; align-items: center; justify-content: center; padding: 0 1px 1px 0; background: #282828; }
.paper { width: 295px; height: 414px; background: #fff; box-shadow: 1px 2px 4px rgba(0, 0, 0, .6); }

.status { display: flex; flex: none; height: 16px; margin-right: 3px; background: #3a3a3a; color: #f4f4f4; }
.status .zoom { width: 48px; padding-left: 9px; background: #333; }
.status .share { width: 24px; background: #4b4b4b; border-right: 1px solid #333; }
.status .size { width: 170px; text-align: center; background: #4b4b4b; white-space: nowrap; }
.status .play { width: 13px; background: #5a5a5a; border-left: 1px solid #333; }
.status .hscroll { flex: 1; background: linear-gradient(#393939, #464646); }
.status .nook { width: 16px; background: #535353; }

/* icon dock */
.dock { width: 38px; display: flex; flex-direction: column; }
.dock-group { background: #535353; border-top: 1px solid #666; margin-bottom: 2px; padding: 3px 0 2px; height: 67px; }
.dock-group button { width: 100%; height: 28px; }
.dock-group .letter { color: #ccc; font-size: 17px; line-height: 28px; }
.dock .dock-group:first-of-type { height: 68px; }
.dock-rest { flex: 1; background: #535353; border-top: 1px solid #666; }

/* panels */
.panels { width: 243px; padding: 0 1px 0 2px; display: flex; flex-direction: column; }
.panels .strip { margin-left: -2px; }
.panel { background: #535353; margin-bottom: 3px; }
.panel-tabs { display: flex; flex: none; align-items: center; height: 17px; background: #3a3a3a; }
.ptab { width: 40px; height: 17px; padding-right: 1px; color: #989898; border-right: 1px solid #2b2b2b; border-bottom: 1px solid #2b2b2b; }
.ptab.current { background: #535353; color: #e8e8e8; border-bottom: 0; }
.flyout { margin: 0 4px 0 auto; }
.adjust { height: 112px; padding: 6px 9px; }
.adjust p { margin: 0; color: #fff; line-height: 16px; }
.adj-row { display: flex; justify-content: center; gap: 8px; margin: 0 31px 11px 0; }
.adjust p + .adj-row { margin-top: 8px; }
.a { width: 16px; height: 16px; stroke: #d0d0d0; }
.a .f { fill: #d0d0d0; stroke: none; }
.dim { opacity: .65; }

.layers { flex: 1; display: flex; flex-direction: column; margin: 0; }
.lrow {
  display: flex;
  flex: none;
  align-items: center;
  height: 28px;
  padding: 0 4px;
  border-bottom: 1px solid #383838;
  border-top: 1px solid #686868;
  color: #b8b8b8;
  white-space: nowrap;
}
.lrow.tall { height: 29px; }
.pick {
  height: 21px;
  padding: 0 4px 0 7px;
  gap: 5px;
  justify-content: flex-start;
  border: 1px solid #404040;
  border-radius: 2px;
  background: linear-gradient(#646464, #585858);
}
.ud { margin-left: auto; fill: #b8b8b8; }
.kind { width: 71px; }
.blend { width: 111px; margin-right: 7px; }
.filters { display: flex; gap: 10px; margin-left: 20px; }
.switch { width: 10px; height: 17px; margin-left: auto; border: 1px solid #383838; background: linear-gradient(#777 8px, #444 8px); }
.l { width: 14px; height: 14px; stroke: #a4a4a4; }
.l .f { fill: #a4a4a4; stroke: none; }
.field { display: flex; width: 57px; height: 21px; margin-left: auto; border: 1px solid #3d3d3d; border-radius: 2px; }
.field.close { margin-left: 6px; }
.field input { width: 36px; padding: 0 0 0 3px; border: 0; background: #4a4a4a; color: #757575; font: inherit; }
.field button { flex: 1; border-left: 1px solid #3d3d3d; background: #5c5c5c; font-size: 10px; }
.lock-label { padding-left: 2px; width: 38px; }
.locks { display: flex; gap: 8px; margin-right: auto; }
.list { flex: 1; display: flex; background: #454545; }
.layer { flex: 1; display: flex; height: 40px; border-bottom: 1px solid #363636; background: #535353; }
.eye { width: 31px; border-right: 1px solid #363636; }
.layer-body { flex: 1; display: flex; align-items: center; padding: 0 16px 0 3px; background: #6b7d94; color: #fff; }
.thumb { width: 24px; height: 32px; border: 1px solid #000; background: #fff; margin-right: 12px; }
.layer-body em { flex: 1; }
.list-scroll { width: 15px; background: #3f3f3f; }
.layer-tools { display: flex; flex: none; align-items: center; gap: 13px; height: 18px; padding-left: 37px; border-top: 1px solid #686868; }
.b { width: 14px; height: 14px; stroke: #d8d8d8; }
.b .f { fill: #d8d8d8; stroke: none; }
.fx { width: 14px; color: #999; font: italic 14px/16px "Liberation Serif", serif; }

/* annotations over the window */
.arrows, .cursor, .watermark, .ime { position: absolute; z-index: 10; pointer-events: none; }
.arrows { left: 0; top: 0; filter: drop-shadow(2px 2px 2px rgba(0, 0, 0, .6)); }
.cursor { left: 131px; top: 363px; }
.watermark { right: 9px; bottom: 7px; display: flex; opacity: .75; }
.watermark div { display: flex; flex-direction: column; }
.watermark strong { color: #1f66b8; font-size: 21px; line-height: 24px; font-weight: 500; }
.watermark b { color: #22a04a; font-size: 16px; line-height: 18px; font-weight: 500; }
.ime {
  right: 3px;
  bottom: 6px;
  width: 60px;
  height: 25px;
  border-radius: 5px;
  background: #fff;
  color: #222;
  text-align: center;
  font-size: 13px;
  line-height: 25px;
  white-space: nowrap;
}
```
